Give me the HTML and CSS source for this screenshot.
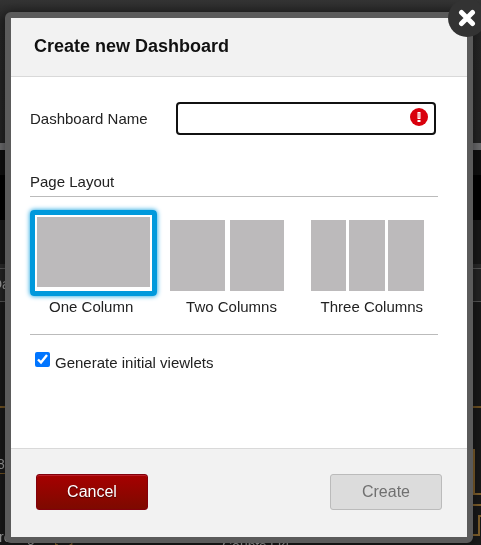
FILE: index.html
```html
<!DOCTYPE html>
<html lang="en">
<head>
    <meta charset="UTF-8">
    <meta name="viewport" content="width=device-width, initial-scale=1.0">
    <title>Create new Dashboard</title>
    <link rel="stylesheet" href="styles.css">
</head>
<body>
    <!-- Dimmed dashboard behind the dialog -->
    <svg class="backdrop" aria-hidden="true">
        <defs>
            <linearGradient id="topbar" x1="0" y1="0" x2="0" y2="1">
                <stop offset="0" stop-color="#343434"/>
                <stop offset="0.15" stop-color="#262626"/>
                <stop offset="1" stop-color="#242424"/>
            </linearGradient>
        </defs>
        <rect width="100%" height="143" fill="url(#topbar)"/>
        <rect y="143" width="100%" height="7" fill="#6c6c6e"/>
        <rect y="150" width="100%" height="25" fill="#101010"/>
        <rect y="175" width="100%" height="45" fill="#020202"/>
        <rect y="220" width="100%" height="44" fill="#181818"/>
        <rect y="264" width="100%" height="4" fill="#292929"/>
        <rect y="268" width="100%" height="1" fill="#555"/>
        <rect y="269" width="100%" height="32" fill="#242424"/>
        <rect y="301" width="100%" height="1" fill="#555"/>
        <rect y="406" width="100%" height="2" fill="#6e5122"/>
        <rect y="473" width="10" height="1" fill="#6e5122"/>
        <text x="-8" y="289">Da</text>
        <text x="-3" y="469">8</text>
        <text x="-1" y="542">rering</text>
        <text x="54" y="542" fill="#80602c">[ &#160; ]</text>
        <text x="222" y="551">Counts [ k]</text>
        <svg x="100%" overflow="visible">
            <path d="M-10 450h3v44h8M-10 505h10M-10 535h8v-19h4" fill="none" stroke="#80602c" stroke-width="2"/>
        </svg>
    </svg>

    <form class="dialog" role="dialog" aria-labelledby="dialog-title">
        <button type="button" class="close" aria-label="Close">
            <svg width="18" height="18" viewBox="0 0 18 18">
                <path d="M3.500 3.500L14.500 14.500M14.500 3.500L3.500 14.500" stroke="#fff" stroke-width="5" stroke-linecap="round"/>
            </svg>
        </button>

        <header class="dialog-header">
            <h1 id="dialog-title">Create new Dashboard</h1>
        </header>

        <div class="dialog-body">
            <div class="field">
                <label for="name">Dashboard Name</label>
                <div class="name-box">
                    <input type="text" id="name" required>
                    <svg class="error-icon" width="18" height="18" viewBox="0 0 18 18">
                        <circle cx="9" cy="9" r="9" fill="#d9000d"/>
                        <path d="M7.500 4h3v7h-3zM7.500 12h3v2h-3z" fill="#fff"/>
                        <path d="M8.500 5h1v5h-1z" fill="#ee8087"/>
                    </svg>
                </div>
            </div>

            <fieldset class="layouts">
                <legend>Page Layout</legend>
                <div class="options">
                    <label class="option">
                        <input type="radio" name="layout" value="1" checked>
                        <span class="preview"><i></i></span>
                        <span class="caption">One Column</span>
                    </label>
                    <label class="option">
                        <input type="radio" name="layout" value="2">
                        <span class="preview two"><i></i><i></i></span>
                        <span class="caption">Two Columns</span>
                    </label>
                    <label class="option">
                        <input type="radio" name="layout" value="3">
                        <span class="preview three"><i></i><i></i><i></i></span>
                        <span class="caption">Three Columns</span>
                    </label>
                </div>
            </fieldset>

            <div class="generate">
                <input type="checkbox" id="viewlets" checked>
                <label for="viewlets">Generate initial viewlets</label>
            </div>
        </div>

        <footer class="dialog-footer">
            <button type="button" class="btn btn-cancel">Cancel</button>
            <button type="submit" class="btn btn-create" disabled>Create</button>
        </footer>
    </form>
</body>
</html>
```
FILE: styles.css
```css
* {
    box-sizing: border-box;
}

body {
    margin: 0;
    padding: 12px 8px 2px 5px;
    overflow: hidden;
    background: #191919;
    color: #222;
    font-family: Arial, "Liberation Sans", sans-serif;
    font-size: 15px;
    line-height: 20px;
}

/* Page behind the dialog */
.backdrop {
    position: fixed;
    top: 0;
    left: 0;
    width: 100%;
    height: 100%;
    font-size: 14px;
    fill: #9a9a9a;
}

/* Dialog */
.dialog {
    position: relative;
    border: 6px solid #5b5b5b;
    border-radius: 6px;
    background: #fff;
    box-shadow: 0 0 12px rgba(0, 0, 0, 0.5);
}

.close {
    position: absolute;
    top: -19px;
    right: -19px;
    display: flex;
    align-items: center;
    justify-content: center;
    width: 38px;
    height: 38px;
    padding: 0;
    border: 0;
    border-radius: 50%;
    background: #333;
    cursor: pointer;
}

.dialog-header {
    padding: 18px 23px 20px;
    border-bottom: 1px solid #d9d9d9;
    background: #f2f2f2;
}

.dialog-header h1 {
    margin: 0;
    color: #111;
    font-size: 18px;
    line-height: 20px;
}

.dialog-body {
    padding: 25px 29px 75px 19px;
}

/* Name field */
.field {
    display: flex;
    align-items: center;
    gap: 16px;
    padding-right: 2px;
}

.field label {
    flex: 0 0 130px;
}

.name-box {
    position: relative;
    flex: 1;
}

.name-box input {
    display: block;
    width: 100%;
    height: 33px;
    padding: 0 32px 0 8px;
    border: 2px solid #111;
    border-radius: 4px;
    font: inherit;
    outline: none;
}

.error-icon {
    position: absolute;
    top: 6px;
    right: 8px;
}

/* Layout choice */
.layouts {
    margin: 37px 0 0;
    padding: 0;
    border: 0;
    border-bottom: 1px solid #bbb;
}

.layouts legend {
    width: 100%;
    padding: 0 0 4px;
    border-bottom: 1px solid #bbb;
}

.options {
    display: grid;
    grid-template-columns: repeat(3, 1fr);
    gap: 13px;
    padding: 13px 0 17px;
}

.option {
    cursor: pointer;
}

.option input {
    position: absolute;
    opacity: 0;
}

.preview {
    display: flex;
    height: 71px;
    margin: 10px 14px 6px 0;
}

.preview i {
    flex: 1;
    background: #bcbabb;
}

.two {
    gap: 5px;
}

.three {
    gap: 3px;
}

.option input:checked + .preview {
    height: 86px;
    margin: 0 0 1px;
    padding: 2px 2px 4px;
    border: 5px solid #0099dc;
    border-radius: 4px;
    box-shadow: 0 0 5px #0099dc;
}

.caption {
    display: block;
    padding-right: 5px;
    text-align: center;
}

/* Viewlets checkbox */
.generate {
    display: flex;
    align-items: flex-start;
    gap: 5px;
    padding: 17px 5px 0;
}

.generate input {
    width: 15px;
    height: 15px;
    margin: 0;
}

.generate label {
    padding-top: 1px;
}

/* Footer buttons */
.dialog-footer {
    display: flex;
    justify-content: space-between;
    padding: 25px 25px 27px;
    border-top: 1px solid #d9d9d9;
    background: #f2f2f2;
}

.btn {
    width: 112px;
    height: 36px;
    border-radius: 3px;
    font-family: inherit;
    font-size: 16px;
}

.btn-cancel {
    border: 1px solid #83000c;
    background: linear-gradient(#a60000, #7d0a00);
    box-shadow: inset 0 1px 0 #b8202a;
    color: #fff;
    text-shadow: 0 1px 1px #400;
}

.btn-create {
    border: 1px solid #bbb;
    background: #dcdcdc;
    color: #707070;
}
```
